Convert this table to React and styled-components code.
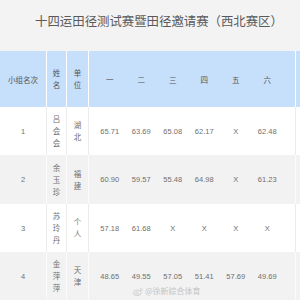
import React from 'react'
import styled, { createGlobalStyle } from 'styled-components'

const FONT = '"Liberation Sans", "Noto Sans CJK SC", sans-serif'

const GlobalStyle = createGlobalStyle`
  html, body {
    margin: 0;
    padding: 0;
    background: #f3f3f3;
    overflow: hidden;
  }
  body {
    font-family: ${FONT};
  }
`

const Page = styled.div`
  position: relative;
  width: 300px;
  height: 300px;
  overflow: hidden;
  background: #f3f3f3;
`

const Title = styled.h1`
  margin: 0;
  height: 51px;
  padding: 13px 0 0 18px;
  box-sizing: border-box;
  font-family: "Noto Sans CJK SC", sans-serif;
  font-size: 12.4px;
  line-height: 16px;
  font-weight: 400;
  color: #5a5a5a;
  text-align: center;
  white-space: nowrap;
`

const Row = styled.div`
  display: grid;
  grid-template-columns: 47px 20px 22px 207px 1fr;
  height: ${p => p.height}px;
  background: ${p => p.bg};
  font-size: 7.5px;
  color: ${p => p.head ? '#555' : '#707070'};
`

const Cell = styled.div`
  display: flex;
  align-items: center;
  justify-content: center;
  border-right: 1px solid ${p => p.line};
  box-sizing: border-box;
`

const Stack = styled.div`
  display: flex;
  flex-direction: column;
  align-items: center;
  line-height: 12px;
  font-family: "Noto Sans CJK SC", sans-serif;
`

const Scores = styled.div`
  display: grid;
  grid-template-columns: repeat(6, 1fr);
  padding: 0 12px 0 5px;
  border-right: 1px solid ${p => p.line};
  box-sizing: border-box;
  align-items: center;
  justify-items: center;
`

const Score = styled.span`
  font-family: ${p => p.cjk ? '"Noto Sans CJK SC", sans-serif' : FONT};
`

const Watermark = styled.div`
  position: absolute;
  left: 133px;
  top: 285px;
  display: flex;
  align-items: center;
  gap: 2px;
  font-family: "Noto Sans CJK SC", sans-serif;
  font-size: 8px;
  line-height: 12px;
  color: #c4c4c4;
`

const rows = [
  { rank: '1', name: '吕会会', unit: '湖北', scores: ['65.71', '63.69', '65.08', '62.17', 'X', '62.48'], bg: '#ffffff', line: '#ececec', height: 48 },
  { rank: '2', name: '余玉珍', unit: '福建', scores: ['60.90', '59.57', '55.48', '64.98', 'X', '61.23'], bg: '#f2f2f2', line: '#fbfbfb', height: 49 },
  { rank: '3', name: '苏玲丹', unit: '个人', scores: ['57.18', '61.68', 'X', 'X', 'X', 'X'], bg: '#ffffff', line: '#ececec', height: 48 },
  { rank: '4', name: '金萍萍', unit: '天津', scores: ['48.65', '49.55', '57.05', '51.41', '57.69', '49.69'], bg: '#f2f2f2', line: '#fbfbfb', height: 48 }
]

const heads = ['一', '二', '三', '四', '五', '六']

const Chars = ({ text }) => (
  <Stack>{text.split('').map((c, i) => <span key={i}>{c}</span>)}</Stack>
)

const WeiboLogo = () => (
  <svg width='10' height='9' viewBox='0 0 20 17'>
    <ellipse cx='8.5' cy='11' rx='8' ry='5.5' fill='none' stroke='#c8c8c8' strokeWidth='1.6' />
    <ellipse cx='8' cy='11.5' rx='3' ry='2.4' fill='none' stroke='#c8c8c8' strokeWidth='1.3' />
    <path d='M14 2.5a4.5 4.5 0 0 1 4.5 5' fill='none' stroke='#c8c8c8' strokeWidth='1.4' />
    <path d='M14 5.2a2 2 0 0 1 2 2.2' fill='none' stroke='#c8c8c8' strokeWidth='1.2' />
  </svg>
)

export default function App () {
  return (
    <Page>
      <GlobalStyle />
      <Title>十四运田径测试赛暨田径邀请赛（西北赛区）</Title>
      <Row head height={56} bg='#c6dffa'>
        <Cell line='#ffffff'><Score cjk>小组名次</Score></Cell>
        <Cell line='#ffffff'><Chars text='姓名' /></Cell>
        <Cell line='#ffffff'><Chars text='单位' /></Cell>
        <Scores line='#ffffff'>
          {heads.map(h => <Score cjk key={h}>{h}</Score>)}
        </Scores>
        <div />
      </Row>
      {rows.map(r => (
        <Row key={r.rank} height={r.height} bg={r.bg}>
          <Cell line={r.line}>{r.rank}</Cell>
          <Cell line={r.line}><Chars text={r.name} /></Cell>
          <Cell line={r.line}><Chars text={r.unit} /></Cell>
          <Scores line={r.line}>
            {r.scores.map((s, i) => <Score key={i}>{s}</Score>)}
          </Scores>
          <div />
        </Row>
      ))}
      <Watermark>
        <WeiboLogo />
        <span>@徐新综合体育</span>
      </Watermark>
    </Page>
  )
}
